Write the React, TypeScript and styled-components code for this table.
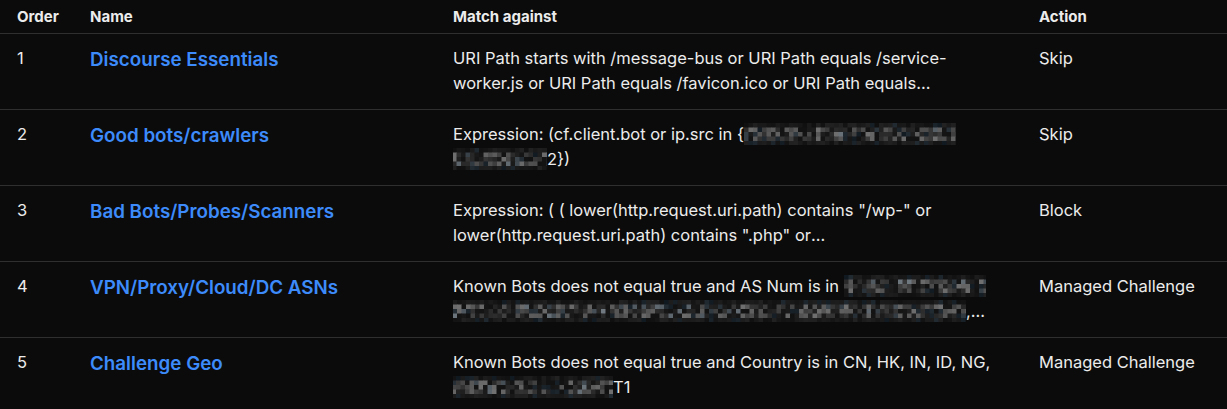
import styled, { createGlobalStyle } from "styled-components";
import React from "react";

const GlobalStyle = createGlobalStyle`
  html, body {
    margin: 0;
    background: #0b0b0b;
  }
  body {
    font-family: Inter, "Noto Sans", "Liberation Sans", sans-serif;
    color: #ececec;
  }
`;

const Table = styled.div`
  width: 1227px;
  background: #0b0b0b;
`;

const Row = styled.div<{ $head?: boolean }>`
  display: grid;
  grid-template-columns: 73px 363px 586px 1fr;
  padding-left: 17px;
  height: ${(p) => (p.$head ? "33px" : "75px")};
  align-items: ${(p) => (p.$head ? "center" : "start")};
  border-bottom: 1px solid #2f2f2f;
  box-sizing: content-box;
`;

const HeadCell = styled.div`
  font-size: 15px;
  font-weight: 700;
  color: #ececec;
`;

const Cell = styled.div`
  padding-top: 12px;
  font-size: 16.5px;
  line-height: 25px;
`;

const Name = styled.a`
  display: block;
  padding-top: 12px;
  font-size: 18.8px;
  line-height: 28px;
  font-weight: 600;
  color: #3d8bfb;
  text-decoration: none;
`;

const Match = styled.div`
  padding-top: 12px;
  width: 552px;
  font-size: 16.5px;
  line-height: 25px;
  display: -webkit-box;
  -webkit-box-orient: vertical;
  -webkit-line-clamp: 2;
  overflow: hidden;
`;

const Blur = styled.svg`
  display: inline-block;
  vertical-align: middle;
  margin-top: -3px;
`;

function rand(seed: number) {
  let s = seed;
  return () => {
    s = (s * 16807) % 2147483647;
    return s / 2147483647;
  };
}

function Redacted({ width, seed, shift = 0 }: { width: number; seed: number; shift?: number }) {
  const r = rand(seed);
  const size = 4.5;
  const cols = Math.ceil(width / size);
  const rows = 5;
  const cells: React.ReactNode[] = [];
  for (let y = 0; y < rows; y++) {
    for (let x = 0; x < cols; x++) {
      const v = r();
      const edge = y === 0 || y === rows - 1;
      const base = edge ? 16 + v * 18 : 18 + v * v * 95;
      const blue = r() > 0.85 ? 16 : 0;
      const g = Math.round(base);
      cells.push(
        <rect
          key={`${x}-${y}`}
          x={x * size}
          y={y * size}
          width={size + 0.5}
          height={size + 0.5}
          fill={`rgb(${g},${g + blue / 2},${g + blue})`}
        />
      );
    }
  }
  return (
    <Blur width={width} height={rows * size} style={{ marginLeft: shift }}>
      {cells}
    </Blur>
  );
}

export default function App() {
  return (
    <>
      <GlobalStyle />
      <Table>
        <Row $head>
          <HeadCell>Order</HeadCell>
          <HeadCell>Name</HeadCell>
          <HeadCell>Match against</HeadCell>
          <HeadCell>Action</HeadCell>
        </Row>
        <Row>
          <Cell>1</Cell>
          <Name href="#">Discourse Essentials</Name>
          <Match>
            URI Path starts with /message-bus or URI Path equals /service-worker.js or URI Path
            equals /favicon.ico or URI Path equals /manifest.webmanifest or URI Path starts with
            /uploads
          </Match>
          <Cell>Skip</Cell>
        </Row>
        <Row>
          <Cell>2</Cell>
          <Name href="#">Good bots/crawlers</Name>
          <Match>
            Expression: (cf.client.bot or ip.src in {"{"}
            <Redacted width={212} seed={11} />
            <br />
            <Redacted width={95} seed={23} shift={-1} />
            2{"})"}
          </Match>
          <Cell>Skip</Cell>
        </Row>
        <Row>
          <Cell>3</Cell>
          <Name href="#">Bad Bots/Probes/Scanners</Name>
          <Match>
            Expression: ( ( lower(http.request.uri.path) contains "/wp-" or
            lower(http.request.uri.path) contains ".php" or lower(http.request.uri.path) contains
            ".env" ) )
          </Match>
          <Cell>Block</Cell>
        </Row>
        <Row>
          <Cell>4</Cell>
          <Name href="#">VPN/Proxy/Cloud/DC ASNs</Name>
          <Match>
            Known Bots does not equal true and AS Num is in <Redacted width={142} seed={37} />
            <br />
            <Redacted width={518} seed={51} shift={-5} />
            ,…
          </Match>
          <Cell>Managed Challenge</Cell>
        </Row>
        <Row>
          <Cell>5</Cell>
          <Name href="#">Challenge Geo</Name>
          <Match>
            Known Bots does not equal true and Country is in CN, HK, IN, ID, NG,
            <br />
            <Redacted width={166} seed={77} shift={-6} />
            T1
          </Match>
          <Cell>Managed Challenge</Cell>
        </Row>
      </Table>
    </>
  );
}
